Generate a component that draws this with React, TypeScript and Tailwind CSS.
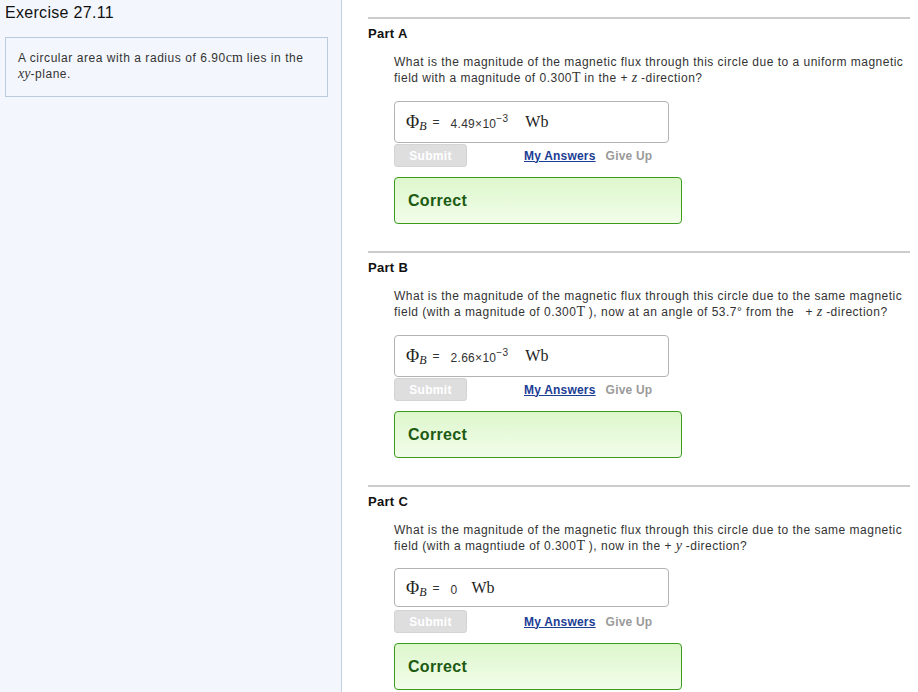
import React from "react";

const sans = { fontFamily: '"Liberation Sans", Arial, sans-serif' };
const serif = { fontFamily: '"Liberation Serif", "Times New Roman", serif' };

function M({ children, italic }: { children: React.ReactNode; italic?: boolean }) {
  return (
    <span style={serif} className={`text-[14px] leading-none tracking-normal ${italic ? "italic" : ""}`}>
      {children}
    </span>
  );
}

function Answer({ value, exp, tall }: { value: string; exp?: string; tall: boolean }) {
  return (
    <div
      className={`w-[275px] ${tall ? "h-[42px]" : "h-[39px]"} rounded-[4px] border border-[#b3b3b3] bg-white flex items-center pl-[11px] text-[#333]`}
    >
      <span style={serif} className="text-[18px] leading-none text-[#222]">Φ</span>
      <span style={serif} className="text-[12px] leading-none italic relative top-[4px] text-[#222]">B</span>
      <span className="text-[12px] leading-none ml-[6px]">=</span>
      <span className="text-[12px] leading-none ml-[11px] tracking-[0.3px] relative top-[2px]">
        {value}
        {exp && <span className="text-[10px] relative -top-[6px]">{exp}</span>}
      </span>
      <span style={serif} className={`text-[16px] leading-none ${exp ? "ml-[17px]" : "ml-[14px]"} text-[#222]`}>Wb</span>
    </div>
  );
}

function Part({
  label,
  question,
  value,
  exp,
  tall,
}: {
  label: string;
  question: React.ReactNode;
  value: string;
  exp?: string;
  tall: boolean;
}) {
  return (
    <div className="flex flex-col">
      <div className="h-[2px] bg-[#cccccc]" />
      <div className="mt-[7px] h-[16px] leading-[16px] text-[13px] font-bold text-[#111] tracking-[0.3px]">{label}</div>
      <div className="pl-[26px] mt-[12px]">
        <div className="text-[12px] leading-[16px] text-[#333] tracking-[0.49px]">{question}</div>
        <div className={tall ? "mt-[15px]" : "mt-[14px]"}>
          <Answer value={value} exp={exp} tall={tall} />
        </div>
        <div className={`${tall ? "mt-[1px]" : "mt-[3px]"} flex items-center h-[23px]`}>
          <div className="w-[73px] h-[23px] rounded-[3px] bg-[#dedede] border border-[#d4d4d4] text-white font-bold text-[12px] tracking-[0.3px] flex items-center justify-center">
            Submit
          </div>
          <span className="ml-[57px] text-[12px] font-bold text-[#1b3d94] underline tracking-[0.2px]">My Answers</span>
          <span className="ml-[10px] text-[12px] font-bold text-[#9a9a9a] tracking-[0.2px]">Give Up</span>
        </div>
        <div className="mt-[10px] w-[288px] h-[47px] rounded-[4px] border border-[#3a9b1c] bg-gradient-to-b from-[#ddf7cc] to-[#f2fdea] flex items-center pl-[13px]">
          <span className="text-[16px] font-bold text-[#1d5a12] tracking-[0.3px]">Correct</span>
        </div>
      </div>
    </div>
  );
}

export default function App() {
  return (
    <div style={sans} className="w-[918px] h-[692px] flex bg-white overflow-hidden">
      <div className="w-[342px] shrink-0 bg-[#f3f7fd] border-r border-[#c3cfdf] flex flex-col">
        <div className="ml-[5px] mt-[3px] text-[16px] leading-[20px] text-[#111] tracking-[0.3px]">Exercise 27.11</div>
        <div className="ml-[5px] mt-[14px] w-[323px] h-[60px] border border-[#bccbdc] pl-[12px] pt-[12px] text-[12px] leading-[16px] text-[#333] tracking-[0.55px]">
          A circular area with a radius of 6.90<M>cm</M> lies in the
          <br />
          <M italic>xy</M>-plane.
        </div>
      </div>
      <div className="flex-1 flex flex-col pl-[26px] pr-[8px] pt-[17px] gap-[27px]">
        <Part
          label="Part A"
          question={
            <>
              What is the magnitude of the magnetic flux through this circle due to a uniform magnetic field with a magnitude of 0.300<M>T</M> in the + <M italic>z</M> -direction?
            </>
          }
          value="4.49×10"
          exp="−3"
          tall
        />
        <Part
          label="Part B"
          question={
            <>
              What is the magnitude of the magnetic flux through this circle due to the same magnetic field (with a magnitude of 0.300<M>T</M> ), now at an angle of 53.7° from the &nbsp; + <M italic>z</M> -direction?
            </>
          }
          value="2.66×10"
          exp="−3"
          tall
        />
        <Part
          label="Part C"
          question={
            <>
              What is the magnitude of the magnetic flux through this circle due to the same magnetic field (with a magntiude of 0.300<M>T</M> ), now in the + <M italic>y</M> -direction?
            </>
          }
          value="0"
          tall={false}
        />
      </div>
    </div>
  );
}
